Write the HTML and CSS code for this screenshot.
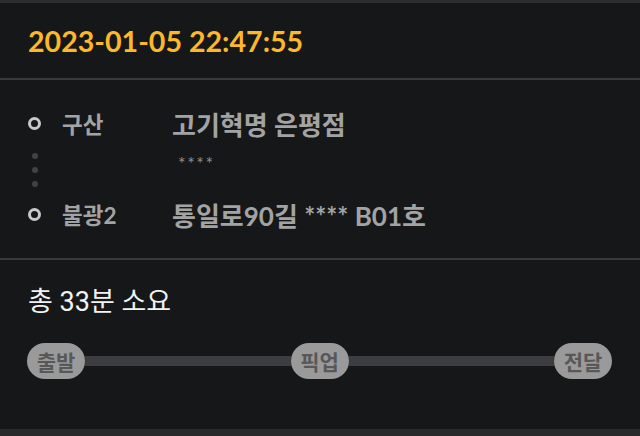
FILE: index.html
```html
<!DOCTYPE html>
<html>
<head>
  <title>배달 상세</title>
  <link rel="stylesheet" href="styles.css">
</head>
<body>
  <div class="card">
    <div class="order-time">2023-01-05 22:47:55</div>

    <div class="route">
      <div class="stop">
        <span class="ring"></span>
        <span class="area">구산</span>
        <span class="addr">고기혁명 은평점</span>
      </div>
      <div class="between">
        <div class="dots">
          <span></span>
          <span></span>
          <span></span>
        </div>
        <div class="masked">****</div>
      </div>
      <div class="stop">
        <span class="ring"></span>
        <span class="area">불광2</span>
        <span class="addr">통일로90길 **** B01호</span>
      </div>
    </div>

    <div class="duration">
      <div class="total">총 33분 소요</div>
      <div class="progress">
        <span class="step">출발</span>
        <span class="line"></span>
        <span class="step">픽업</span>
        <span class="line"></span>
        <span class="step">전달</span>
      </div>
    </div>

    <div class="bottom-band"></div>
  </div>
</body>
</html>
```

FILE: styles.css
```css
* {
  margin: 0;
  padding: 0;
  box-sizing: border-box;
}

body {
  background-color: #161719;
  font-family: Lato, "Noto Sans CJK KR", sans-serif;
  height: 436px;
  overflow: hidden;
}

.card {
  border-top: 3px solid #2e2e31;
}

.order-time {
  height: 77px;
  padding: 0 28px;
  display: flex;
  align-items: center;
  color: #fbb82a;
  font-size: 28.6px;
  font-weight: bold;
  border-bottom: 2px solid #3a3a3d;
}

.route {
  height: 180px;
  padding: 28px 28px 0;
  border-bottom: 2px solid #3a3a3d;
}

.stop {
  display: flex;
  align-items: center;
  height: 30px;
  color: #a3a3a3;
  font-weight: bold;
}

.ring {
  width: 13px;
  height: 13px;
  border: 3px solid #c9c9c9;
  border-radius: 50%;
  margin-right: 21px;
}

.area {
  width: 110px;
  font-size: 22.5px;
}

.addr {
  font-size: 26px;
}

.between {
  display: flex;
  height: 61px;
}

.dots {
  width: 144px;
  display: flex;
  flex-direction: column;
  gap: 8px;
  padding: 15px 0 0 4px;
}

.dots span {
  width: 6px;
  height: 6px;
  border-radius: 50%;
  background-color: #424245;
}

.masked {
  padding: 14px 0 0 6px;
  color: #8e8e8e;
  font-size: 18px;
  letter-spacing: 1.5px;
}

.duration {
  height: 169px;
  padding: 26px 28px 0 27px;
}

.total {
  color: #f2f2f2;
  font-family: Roboto, "Noto Sans CJK KR", sans-serif;
  font-size: 27px;
  line-height: 32px;
  padding-left: 1px;
}

.progress {
  display: flex;
  align-items: center;
  margin-top: 25px;
}

.step {
  width: 58px;
  height: 36px;
  border-radius: 18px;
  background-color: #9a9a9a;
  color: #585858;
  font-family: "Noto Sans CJK KR", sans-serif;
  font-size: 21px;
  font-weight: bold;
  display: flex;
  align-items: center;
  justify-content: center;
}

.line {
  flex: 1;
  height: 10px;
  background-color: #3d3c41;
}

.bottom-band {
  height: 20px;
  background-color: #29292c;
}
```
